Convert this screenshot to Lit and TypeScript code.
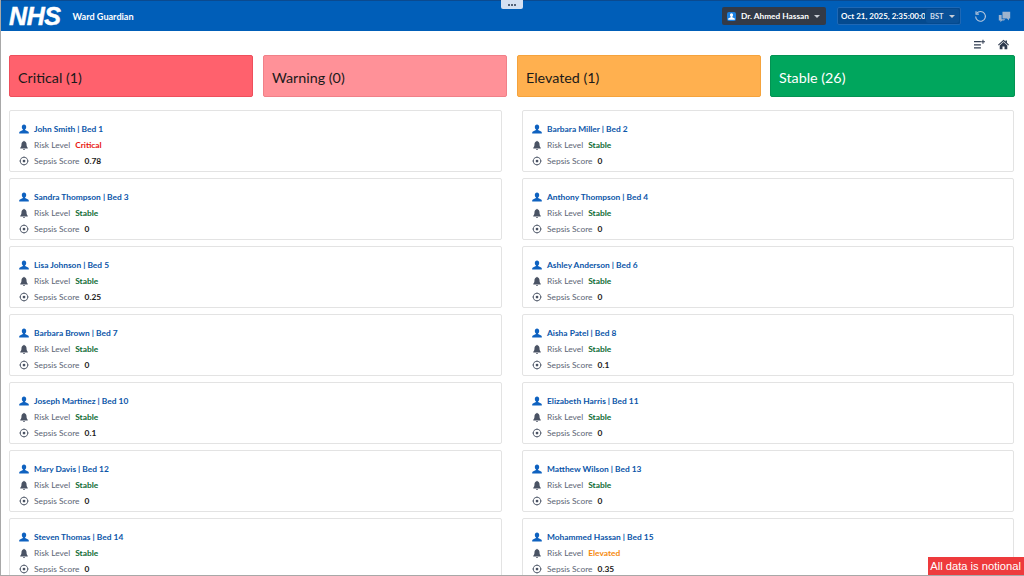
import { LitElement, html, css, svg } from "lit";
import { customElement } from "lit/decorators.js";

interface Patient {
  name: string;
  bed: number;
  risk: "Critical" | "Stable" | "Elevated";
  score: string;
}

const PATIENTS: Patient[] = [
  { name: "John Smith", bed: 1, risk: "Critical", score: "0.78" },
  { name: "Barbara Miller", bed: 2, risk: "Stable", score: "0" },
  { name: "Sandra Thompson", bed: 3, risk: "Stable", score: "0" },
  { name: "Anthony Thompson", bed: 4, risk: "Stable", score: "0" },
  { name: "Lisa Johnson", bed: 5, risk: "Stable", score: "0.25" },
  { name: "Ashley Anderson", bed: 6, risk: "Stable", score: "0" },
  { name: "Barbara Brown", bed: 7, risk: "Stable", score: "0" },
  { name: "Aisha Patel", bed: 8, risk: "Stable", score: "0.1" },
  { name: "Joseph Martinez", bed: 10, risk: "Stable", score: "0.1" },
  { name: "Elizabeth Harris", bed: 11, risk: "Stable", score: "0" },
  { name: "Mary Davis", bed: 12, risk: "Stable", score: "0" },
  { name: "Matthew Wilson", bed: 13, risk: "Stable", score: "0" },
  { name: "Steven Thomas", bed: 14, risk: "Stable", score: "0" },
  { name: "Mohammed Hassan", bed: 15, risk: "Elevated", score: "0.35" },
];

const SUMMARY = [
  { label: "Critical (1)", cls: "critical" },
  { label: "Warning (0)", cls: "warning" },
  { label: "Elevated (1)", cls: "elevated" },
  { label: "Stable (26)", cls: "stable" },
];

const personPath = svg`<path d="M8 .8c-2.200 0-3.500 1.700-3.500 3.900 0 1.600.7 3 1.700 3.800v1.200L1.500 11.800C.6 12.200.3 12.900.3 13.900V15.200h15.400V13.900c0-1-.3-1.700-1.200-2.100L9.800 9.700V8.500c1-.8 1.700-2.200 1.700-3.800C11.500 2.500 10.200.8 8 .8z"/>`;

@customElement("app-root")
export class AppRoot extends LitElement {
  static override styles = css`
    :host {
      display: block;
      font-family: Lato, "Noto Sans", sans-serif;
    }

    .page {
      position: relative;
      display: flex;
      flex-direction: column;
      height: 576px;
      overflow: hidden;
      background: #fff;
      box-sizing: border-box;
      border-left: 1px solid #a8a8a8;
      border-bottom: 1px solid #a8a8a8;
    }

    .header {
      position: relative;
      flex: none;
      display: flex;
      align-items: center;
      height: 31px;
      box-sizing: border-box;
      padding: 0 13px 0 8px;
      background: #005eb8;
      border-top: 1px solid #0b4a8f;
      color: #fff;
    }

    .logo {
      font-family: "Liberation Sans", sans-serif;
      font-size: 25px;
      font-weight: 700;
      font-style: italic;
      letter-spacing: -0.4px;
      line-height: 1;
      -webkit-text-stroke: 0.5px #fff;
    }

    .app-name {
      margin-left: 12px;
      font-size: 9.1px;
      font-weight: 700;
    }

    .handle {
      position: absolute;
      top: -1px;
      left: 500px;
      display: flex;
      align-items: center;
      justify-content: center;
      gap: 1px;
      width: 22px;
      height: 9px;
      background: #d4e0f2;
      border-radius: 0 0 2px 2px;
    }

    .handle i {
      width: 2px;
      height: 2px;
      border-radius: 50%;
      background: #2b3a50;
    }

    .spacer {
      flex: 1;
    }

    .user {
      display: flex;
      align-items: center;
      width: 104px;
      height: 18px;
      box-sizing: border-box;
      padding: 0 6px 0 5px;
      background: #343a46;
      border-radius: 2px;
      font-size: 8.3px;
      font-weight: 700;
      white-space: nowrap;
    }

    .user-icon {
      display: flex;
      align-items: center;
      justify-content: center;
      width: 9px;
      height: 9px;
      margin-right: 5px;
      background: #1a7fe0;
      border-radius: 2px;
    }

    .user-icon svg {
      width: 7px;
      height: 7px;
      fill: #fff;
    }

    .caret {
      width: 0;
      height: 0;
      margin-left: auto;
      border-left: 3px solid transparent;
      border-right: 3px solid transparent;
      border-top: 3px solid #c9ced6;
    }

    .date {
      display: flex;
      align-items: center;
      width: 124px;
      height: 18px;
      box-sizing: border-box;
      margin-left: 11px;
      padding: 0 1px 0 3px;
      background: #044a8f;
      border: 1px solid #1f68b5;
      border-radius: 2px;
      font-size: 8px;
      font-weight: 700;
    }

    .date-text {
      flex: none;
      width: 84px;
      overflow: hidden;
      white-space: nowrap;
    }

    .zone {
      display: flex;
      align-items: center;
      flex: 1;
      height: 14px;
      margin-left: 1px;
      padding: 0 4px;
      background: #0a5198;
      border-radius: 2px;
      font-size: 7.5px;
      color: #cfdcec;
    }

    .header-actions {
      display: flex;
      align-items: center;
      gap: 11px;
      margin-left: 13px;
    }

    .header-actions svg {
      display: block;
      width: 13px;
      height: 13px;
    }

    .toolbar {
      flex: none;
      display: flex;
      justify-content: flex-end;
      align-items: center;
      gap: 13px;
      height: 24px;
      padding: 2px 15px 0 0;
      box-sizing: border-box;
    }

    .toolbar svg {
      display: block;
      width: 11px;
      height: 11px;
      fill: #2f3b4f;
    }

    .summary {
      flex: none;
      display: grid;
      grid-template-columns: repeat(4, 244px);
      column-gap: 10px;
      margin: 0 0 0 8px;
    }

    .tile {
      display: flex;
      align-items: center;
      height: 42px;
      box-sizing: border-box;
      padding: 2px 0 0 8px;
      border: 1px solid;
      border-radius: 2px;
      font-size: 14.3px;
      color: #1a1a1a;
    }

    .critical {
      background: #ff616d;
      border-color: #ee4f5c;
    }

    .warning {
      background: #ff9198;
      border-color: #f08088;
    }

    .elevated {
      background: #ffb04f;
      border-color: #f5a33c;
    }

    .tile.stable {
      margin-left: -1px;
      background: #00a65d;
      border-color: #039353;
      color: #fff;
    }

    .cards {
      display: grid;
      grid-template-columns: 493px 492px;
      column-gap: 20px;
      row-gap: 6px;
      margin: 13px 0 0 8px;
    }

    .card {
      display: flex;
      flex-direction: column;
      gap: 3px;
      height: 62px;
      box-sizing: border-box;
      padding: 11px 9px 0;
      background: #fff;
      border: 1px solid #e3e3e3;
      border-radius: 2px;
      font-size: 8.4px;
    }

    .row {
      display: flex;
      align-items: center;
      height: 13px;
      white-space: nowrap;
    }

    .row svg {
      flex: none;
      display: block;
      width: 10px;
      height: 10px;
      margin: 1px 5px 0 0;
      fill: #4a5364;
    }

    .name {
      color: #0a55a8;
      font-weight: 700;
    }

    .row svg.person {
      fill: #0f62c0;
    }

    .label {
      color: #5c6575;
    }

    .value {
      margin-left: 5px;
      font-weight: 700;
      color: #1a1a1a;
    }

    .value.risk-critical {
      color: #e8140c;
    }

    .value.risk-stable {
      color: #0f6b34;
    }

    .value.risk-elevated {
      color: #f58a0b;
    }

    .notice {
      position: absolute;
      right: 0;
      bottom: -1px;
      padding: 0 3px 0 2px;
      height: 19px;
      line-height: 19px;
      background: #ee3a3c;
      color: #fff;
      font-family: "Liberation Sans", sans-serif;
      font-size: 11.2px;
    }
  `;

  private renderCard(p: Patient) {
    return html`
      <div class="card">
        <div class="row name">
          <svg class="person" viewBox="0 0 16 16">${personPath}</svg>
          ${p.name} | Bed ${p.bed}
        </div>
        <div class="row">
          <svg viewBox="0 0 16 16">
            <path d="M8 1c-.6 0-1 .4-1 1v.5C5 3 4 4.600 4 6.500c0 3.500-1 5-2 6v1h12v-1c-1-1-2-2.500-2-6 0-1.900-1-3.500-3-4V2c0-.6-.4-1-1-1zM6.500 14.300a1.500 1.500 0 0 0 3 0z"/>
          </svg>
          <span class="label">Risk Level</span>
          <span class="value risk-${p.risk.toLowerCase()}">${p.risk}</span>
        </div>
        <div class="row">
          <svg viewBox="0 0 16 16">
            <path d="M7.300.5h1.400v1.100a6.500 6.500 0 0 1 5.700 5.700h1.100v1.400h-1.100a6.500 6.500 0 0 1-5.700 5.700v1.100H7.300v-1.100a6.500 6.500 0 0 1-5.700-5.700H.5V7.300h1.100a6.500 6.500 0 0 1 5.700-5.700zM8 2.900a5.100 5.100 0 1 0 0 10.200A5.100 5.100 0 0 0 8 2.900z"/>
            <circle cx="8" cy="8" r="2.200"/>
          </svg>
          <span class="label">Sepsis Score</span>
          <span class="value">${p.score}</span>
        </div>
      </div>
    `;
  }

  override render() {
    return html`
      <div class="page">
        <header class="header">
          <span class="logo">NHS</span>
          <span class="app-name">Ward Guardian</span>
          <div class="handle"><i></i><i></i><i></i></div>
          <div class="spacer"></div>
          <div class="user">
            <span class="user-icon">
              <svg viewBox="0 0 16 16">${personPath}</svg>
            </span>
            Dr. Ahmed Hassan
            <span class="caret"></span>
          </div>
          <div class="date">
            <span class="date-text">Oct 21, 2025, 2:35:00:00</span>
            <span class="zone">BST<span class="caret"></span></span>
          </div>
          <div class="header-actions">
            <svg viewBox="0 0 16 16" fill="none" stroke="#b4c6dc" stroke-width="1.400">
              <path d="M3.200 4.200A6 6 0 1 1 2 8"/>
              <path d="M2.500 1.500v3.500H6" />
            </svg>
            <svg viewBox="0 0 16 16" fill="#9fb4cd">
              <path d="M5.500 2H15v8.500h-1.500V13L11 10.500H5.500z"/>
              <path d="M1 6h3.500v5.500H9L7.500 13H5l-2 2v-2H1z"/>
            </svg>
          </div>
        </header>
        <div class="toolbar">
          <svg viewBox="0 0 16 16">
            <path d="M0 3h10v1.800H0zM0 7.500h10v1.800H0zM0 12h10v1.800H0zM12.300 1h1.500v2.300H16v1.500h-2.200V7h-1.500V4.800h-2V3.300h2z"/>
          </svg>
          <svg viewBox="0 0 16 16">
            <path d="M8 1 0 8.200l1 1.100L8 3.100l7 6.200 1-1.100-3-2.700V2h-2v1.700zM8 4.500 2.500 9.400V15H6.500v-4h3v4h4V9.400z"/>
          </svg>
        </div>
        <section class="summary">
          ${SUMMARY.map((s) => html`<div class="tile ${s.cls}">${s.label}</div>`)}
        </section>
        <section class="cards">${PATIENTS.map((p) => this.renderCard(p))}</section>
        <div class="notice">All data is notional</div>
      </div>
    `;
  }
}

declare global {
  interface HTMLElementTagNameMap {
    "app-root": AppRoot;
  }
}
